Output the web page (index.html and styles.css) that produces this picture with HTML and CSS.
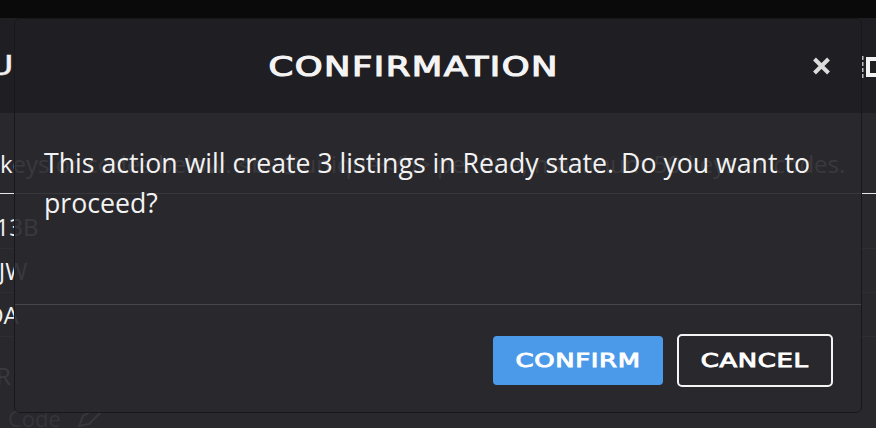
FILE: index.html
```html
<!DOCTYPE html>
<html lang="en">
<head>
  <meta charset="UTF-8" />
  <meta name="viewport" content="width=device-width, initial-scale=1.0" />
  <title>Confirmation</title>
  <link rel="stylesheet" href="styles.css">
</head>
<body>
  <div class="topbar"></div>

  <header class="page-head">
    <div class="head-title"><span class="wide">MENU</span></div>
    <svg class="head-icon" width="15" height="22" viewBox="0 0 15 22">
      <line x1="1.5" y1="0" x2="1.5" y2="22" stroke="#bdbdbd" stroke-width="2" stroke-dasharray="4 2" />
      <rect x="5" y="1" width="10" height="20" fill="#f2f2f2" />
      <rect x="9" y="5" width="6" height="12" fill="#1f1e23" />
    </svg>
  </header>

  <main class="page-main">
    <div class="keys-input">keys or codes below. &lt;b&gt;@unique&lt;/b&gt; per line, maximum 50 keys or codes.</div>
    <ul class="key-list">
      <li>TQ7-4P13B</li>
      <li>5HX2-NJW</li>
      <li>K8M-PDA</li>
      <li class="muted">4TR</li>
    </ul>
    <div class="code-label">
      Code
      <svg width="30" height="20" viewBox="0 0 30 20">
        <path d="M4 18 L8 8 L22 0 L26 4 L14 16 Z" fill="none" stroke="#38373c" stroke-width="2" />
      </svg>
    </div>
  </main>

  <div class="dialog" role="dialog">
    <div class="dialog-head">
      <h2 class="dialog-title"><span class="wide">CONFIRMATION</span></h2>
      <button class="close-btn" aria-label="Close">
        <svg width="19" height="18" viewBox="0 0 19 18">
          <path d="M2.5 2 L16.5 16 M16.5 2 L2.5 16" stroke="#dcdcdc" stroke-width="4" />
        </svg>
      </button>
    </div>
    <div class="dialog-body">
      <p>This action will create 3 listings in Ready state. Do you want to proceed?</p>
    </div>
    <div class="dialog-foot">
      <button class="btn btn-primary"><span class="wide">CONFIRM</span></button>
      <button class="btn btn-outline"><span class="wide">CANCEL</span></button>
    </div>
  </div>
</body>
</html>
```

FILE: styles.css
```css
body {
  margin: 0;
  height: 428px;
  overflow: hidden;
  background: #29282d;
  color: #f2f2f2;
  font-family: "Open Sans", sans-serif;
}
.wide {
  display: inline-block;
  font-family: "DejaVu Sans", sans-serif;
  font-weight: 400;
  letter-spacing: 0.5px;
  -webkit-text-stroke: 0.9px currentColor;
  transform: scaleX(1.36);
}
.topbar {
  height: 18px;
  background: #0a0a0a;
}
.page-head {
  height: 95px;
  background: #1f1e23;
  display: flex;
  align-items: center;
  justify-content: space-between;
}
.head-title {
  width: 14px;
  overflow: hidden;
  display: flex;
  justify-content: flex-end;
  font-size: 26px;
  color: #f2f2f2;
}
.head-title .wide {
  transform-origin: right center;
  -webkit-text-stroke: 0.4px currentColor;
}
.head-icon {
  margin-top: 2px;
}
.page-main {
  padding-top: 31px;
  font-size: 24px;
}
.keys-input {
  line-height: 40px;
  padding-bottom: 9px;
  border-bottom: 1px solid #e6e6e6;
  white-space: nowrap;
  overflow: hidden;
}
.key-list {
  list-style: none;
  margin: 11px 0 0 -86px;
  padding: 0;
}
.key-list li {
  line-height: 43px;
  border-bottom: 1px solid #2f2e33;
  white-space: nowrap;
}
.key-list .muted {
  margin-top: 17px;
  margin-left: 55px;
  color: #3b3a3f;
  border-bottom: none;
}
.code-label {
  display: flex;
  align-items: center;
  gap: 14px;
  margin-top: 6px;
  padding-left: 8px;
  color: #36353a;
  font-size: 22px;
}

.dialog {
  position: absolute;
  left: 14px;
  top: 18px;
  width: 848px;
  height: 395px;
  box-sizing: border-box;
  border: 1px solid #18171b;
  border-radius: 6px;
  overflow: hidden;
  display: flex;
  flex-direction: column;
}
.dialog-head {
  height: 94px;
  flex-shrink: 0;
  display: flex;
  align-items: center;
  padding-right: 30px;
  background: rgba(31, 30, 35, 0.93);
}
.dialog-title {
  flex: 1;
  margin: 0;
  text-align: center;
  font-size: 26px;
  font-weight: 400;
  color: #f4f4f4;
  line-height: 1;
}
.dialog-title .wide {
  letter-spacing: 1.1px;
  -webkit-text-stroke: 1.1px currentColor;
}
.close-btn {
  background: none;
  border: none;
  padding: 0;
  width: 19px;
  height: 18px;
  cursor: pointer;
  display: block;
}
.close-btn svg {
  display: block;
}
.dialog-body {
  flex: 1;
  padding: 30px 29px 0;
  background: rgba(41, 40, 45, 0.92);
}
.dialog-body p {
  margin: 0;
  font-size: 26.7px;
  line-height: 40px;
  color: #f2f2f2;
}
.dialog-foot {
  height: 108px;
  flex-shrink: 0;
  box-sizing: border-box;
  border-top: 1px solid #47464b;
  display: flex;
  align-items: center;
  justify-content: flex-end;
  gap: 14px;
  padding: 3px 28px 0 0;
  background: rgba(41, 40, 45, 0.92);
}
.btn {
  font-size: 19px;
  color: #fff;
  cursor: pointer;
  box-sizing: border-box;
  line-height: 1;
}
.btn-primary {
  width: 170px;
  height: 49px;
  border: none;
  border-radius: 4px;
  background: #4b9aea;
}
.btn-outline {
  width: 156px;
  height: 53px;
  border: 2px solid #f4f4f4;
  border-radius: 5px;
  background: transparent;
}
```
